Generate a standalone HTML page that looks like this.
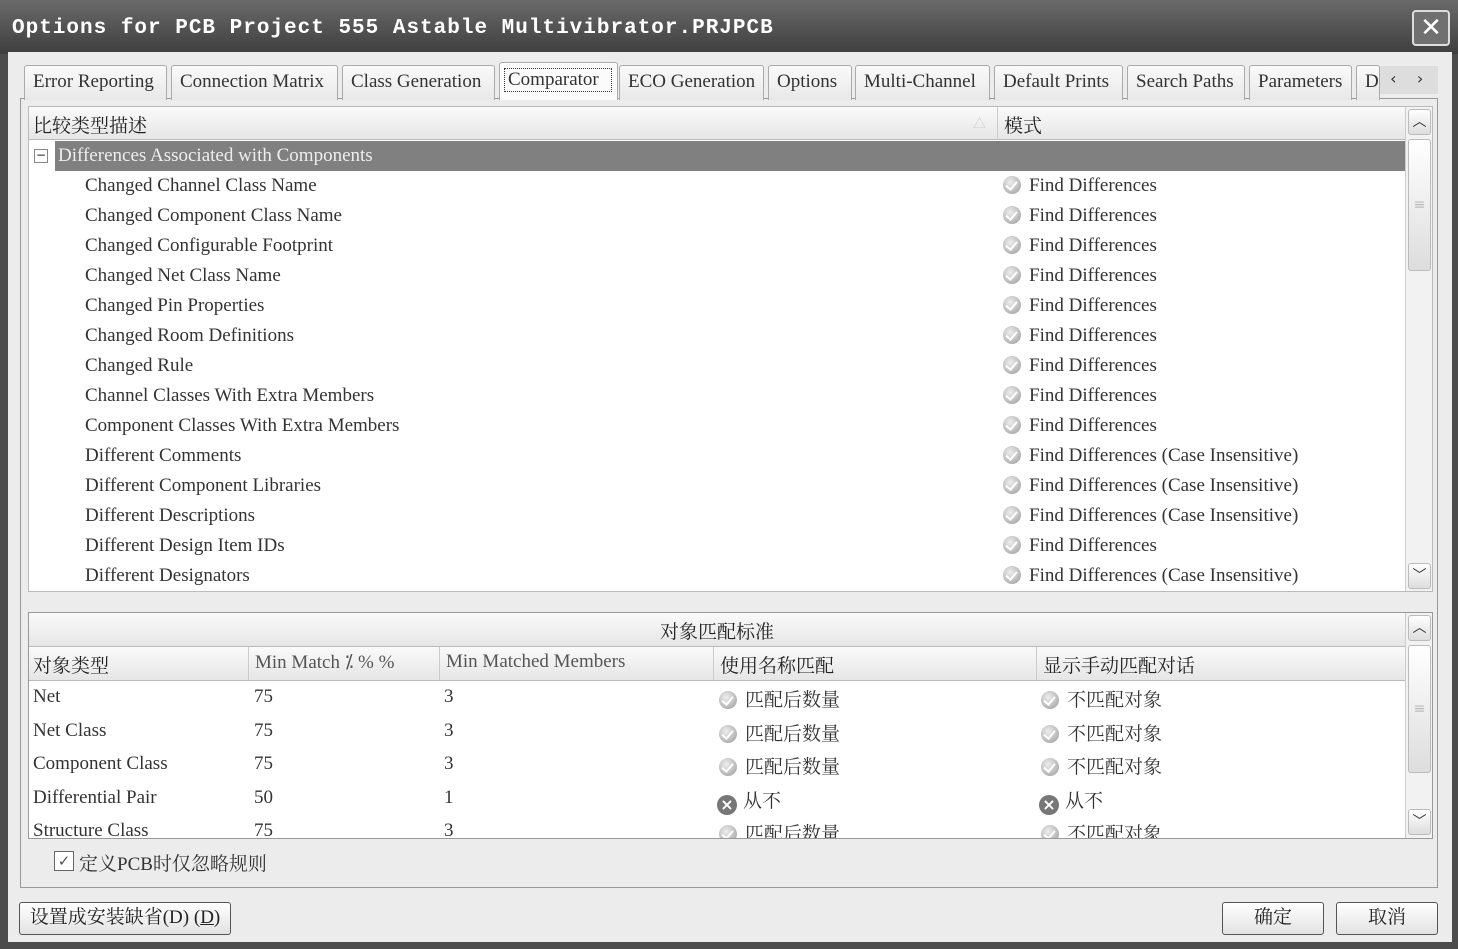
<!DOCTYPE html><html><head><meta charset="utf-8"><style>
*{box-sizing:border-box;margin:0;padding:0}
body{width:1458px;height:949px;background:#4c4c4c;font-family:"Liberation Serif","Noto Serif CJK SC",serif;color:#222;position:relative;overflow:hidden}
.abs{position:absolute}
.title{left:0;top:0;width:1458px;height:54px;background:linear-gradient(#6a6a6a,#3e3e3e);}
.title span{position:absolute;left:12px;top:17px;font:bold 21px "Liberation Mono",monospace;color:#fff;letter-spacing:1px}
.close{right:8px;top:10px;width:38px;height:36px;border:2px solid #ddd;border-radius:4px;background:#707070;color:#fff;font:26px "Liberation Sans",sans-serif;text-align:center;line-height:30px}
.win{left:8px;top:52px;width:1444px;height:890px;background:#ececec}
.tab{top:65px;height:35px;border:1px solid #aaa;border-bottom:none;border-radius:3px 3px 0 0;background:linear-gradient(#fafafa,#e8e8e8);font-size:19px;padding:5px 0 0 8px;white-space:nowrap;overflow:hidden;color:#333}
.panel{left:20px;top:98px;width:1418px;height:790px;border:1px solid #999;background:#ececec}
.list{left:28px;top:106px;width:1405px;height:486px;background:#fff;border:1px solid #bbb}
.hdr{background:linear-gradient(#fafafa,#e6e6e6);border-bottom:1px solid #bbb;font-size:19px}
.row{position:absolute;font-size:19px;color:#333;white-space:nowrap}
.sb{background:#f2f2f2;border-left:1px solid #ccc}
.sbb{position:absolute;left:2px;width:23px;height:26px;border:1px solid #bbb;border-radius:3px;background:linear-gradient(#fff,#ddd);text-align:center;font:14px "DejaVu Sans",sans-serif;line-height:24px;color:#333}
.ic{display:inline-block;width:18px;height:18px;border-radius:50%;background:radial-gradient(circle at 40% 35%,#eee,#999);vertical-align:-3px;margin-right:8px;position:relative}
.ic:after{content:"";position:absolute;left:5px;top:3px;width:5px;height:9px;border:solid #fff;border-width:0 2px 2px 0;transform:rotate(40deg)}
.ix{display:inline-block;width:20px;height:20px;border-radius:50%;background:#777;color:#fff;font:bold 16px "DejaVu Sans",sans-serif;text-align:center;line-height:20px;vertical-align:-3px;margin-right:6px}
.btn{top:902px;height:33px;border:1px solid #555;border-radius:3px;background:linear-gradient(#fff,#e2e2e2);font-size:19px;text-align:center;line-height:30px}
</style></head><body>
<div class="abs title"><span>Options for PCB Project 555 Astable Multivibrator.PRJPCB</span></div>
<div class="abs close">✕</div>
<div class="abs win"></div>
<div class="abs panel"></div>
<div class="abs tab" style="left:24px;width:143px">Error Reporting</div>
<div class="abs tab" style="left:171px;width:167px">Connection Matrix</div>
<div class="abs tab" style="left:342px;width:153px">Class Generation</div>
<div class="abs tab" style="left:499px;width:119px;top:62px;height:38px;background:#fbfbfb"><div style="border:1px dotted #333;padding:0 3px;margin-left:-4px;width:108px">Comparator</div></div>
<div class="abs tab" style="left:619px;width:145px">ECO Generation</div>
<div class="abs tab" style="left:768px;width:84px">Options</div>
<div class="abs tab" style="left:855px;width:135px">Multi-Channel</div>
<div class="abs tab" style="left:994px;width:129px">Default Prints</div>
<div class="abs tab" style="left:1127px;width:118px">Search Paths</div>
<div class="abs tab" style="left:1249px;width:103px">Parameters</div>
<div class="abs tab" style="left:1356px;width:24px">D</div>
<div class="abs" style="left:1380px;top:66px;width:58px;height:28px;background:#ddd;font:16px 'DejaVu Sans';color:#333;line-height:26px">&nbsp;&nbsp;‹ &nbsp;&nbsp; ›</div>

<div class="abs list">
 <div class="abs hdr" style="left:0;top:0;width:1376px;height:33px"><span style="position:absolute;left:4px;top:4px">比较类型描述</span><span style="position:absolute;left:944px;top:6px;color:#ccc;font-size:13px">△</span><span style="position:absolute;left:968px;top:0;height:33px;border-left:1px solid #ccc;padding:4px 0 0 6px">模式</span></div>
 <div class="abs" style="left:26px;top:34px;width:1350px;height:30px;background:#808080"></div>
 <div class="abs" style="left:5px;top:42px;width:14px;height:14px;border:1px solid #888;background:#fff;font:12px 'DejaVu Sans';line-height:11px;text-align:center">−</div>
 <div class="row" style="left:29px;top:38px;color:#eee">Differences Associated with Components</div>
 <div class="abs sb" style="left:1376px;top:0;width:27px;height:484px"><div class="sbb" style="top:2px">︿</div><div class="sbb" style="top:32px;height:132px;line-height:130px;color:#bbb">≡</div><div class="sbb" style="top:456px">﹀</div></div>
</div>
<div id="rows"></div>

<div class="abs" style="left:28px;top:612px;width:1405px;height:227px;background:#fff;border:1px solid #999">
 <div class="abs hdr" style="left:0;top:0;width:1376px;height:34px;text-align:center;padding:4px 0 0 0">对象匹配标准</div>
 <div class="abs hdr" style="left:0;top:34px;width:1376px;height:34px">
  <span style="position:absolute;left:4px;top:4px">对象类型</span>
  <span style="position:absolute;left:219px;top:0;height:33px;border-left:1px solid #ccc;padding:4px 0 0 6px;color:#555">Min Match ⁒ % %</span>
  <span style="position:absolute;left:410px;top:0;height:33px;border-left:1px solid #ccc;padding:4px 0 0 6px;color:#555">Min Matched Members</span>
  <span style="position:absolute;left:684px;top:0;height:33px;border-left:1px solid #ccc;padding:4px 0 0 6px">使用名称匹配</span>
  <span style="position:absolute;left:1007px;top:0;height:33px;border-left:1px solid #ccc;padding:4px 0 0 6px">显示手动匹配对话</span>
 </div>
 <div class="abs sb" style="left:1376px;top:0;width:27px;height:225px"><div class="sbb" style="top:2px">︿</div><div class="sbb" style="top:32px;height:128px;line-height:126px;color:#bbb">≡</div><div class="sbb" style="top:196px">﹀</div></div>
 <div id="g" class="abs" style="left:0;top:68px;width:1376px;height:157px;overflow:hidden"></div>
</div>
<div class="abs" style="left:54px;top:851px;width:20px;height:20px;border:1px solid #666;background:#fff;font:15px 'DejaVu Sans';line-height:18px;text-align:center;color:#555">✓</div>
<div class="row" style="left:79px;top:849px">定义PCB时仅忽略规则</div>
<div class="abs btn" style="left:19px;width:212px">设置成安装缺省(D) (<u>D</u>)</div>
<div class="abs btn" style="left:1222px;width:102px">确定</div>
<div class="abs btn" style="left:1336px;width:102px">取消</div>
<script>
var n=["Changed Channel Class Name","Changed Component Class Name","Changed Configurable Footprint","Changed Net Class Name","Changed Pin Properties","Changed Room Definitions","Changed Rule","Channel Classes With Extra Members","Component Classes With Extra Members","Different Comments","Different Component Libraries","Different Descriptions","Different Design Item IDs","Different Designators"];
var ci=[9,10,11,13],h="";
n.forEach(function(t,i){var y=175+i*30;h+='<div class="row" style="left:85px;top:'+y+'px">'+t+'</div><div class="row" style="left:1003px;top:'+y+'px"><span class="ic"></span>Find Differences'+(ci.indexOf(i)>=0?' (Case Insensitive)':'')+'</div>';});
document.getElementById("rows").innerHTML=h;
var g=[["Net",75,3,1],["Net Class",75,3,1],["Component Class",75,3,1],["Differential Pair",50,1,0],["Structure Class",75,3,1]],s="";
g.forEach(function(r,i){var y=5+i*33.5;s+='<div class="row" style="left:4px;top:'+y+'px">'+r[0]+'</div><div class="row" style="left:225px;top:'+y+'px">'+r[1]+'</div><div class="row" style="left:415px;top:'+y+'px">'+r[2]+'</div>'+(r[3]?'<div class="row" style="left:690px;top:'+(y-1)+'px"><span class="ic"></span>匹配后数量</div><div class="row" style="left:1012px;top:'+(y-1)+'px"><span class="ic"></span>不匹配对象</div>':'<div class="row" style="left:688px;top:'+(y-1)+'px"><span class="ix">×</span>从不</div><div class="row" style="left:1010px;top:'+(y-1)+'px"><span class="ix">×</span>从不</div>');});
document.getElementById("g").innerHTML=s;
</script>
</body></html>
